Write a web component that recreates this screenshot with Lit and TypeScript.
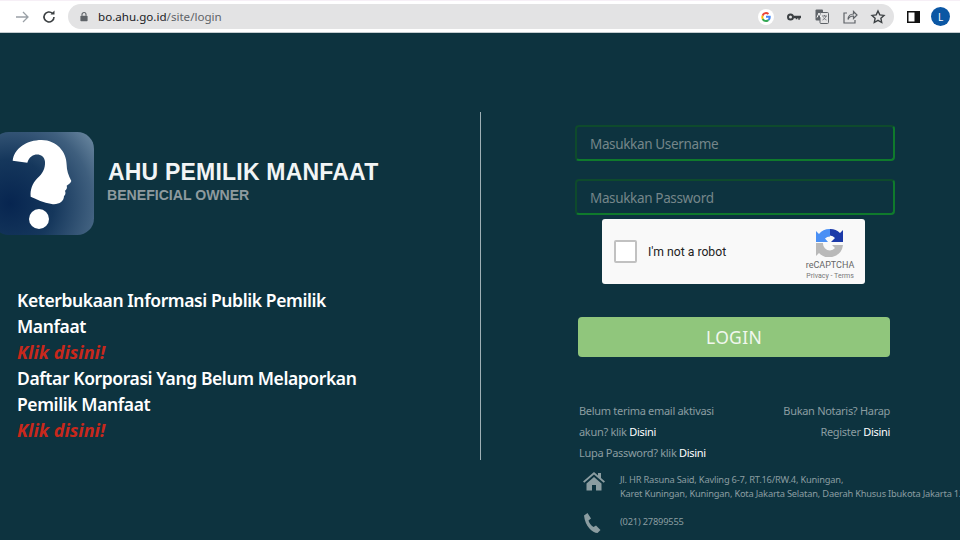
import { LitElement, html, css } from "lit";
import { customElement } from "lit/decorators.js";

@customElement("app-root")
export class AppRoot extends LitElement {
  static styles = css`
    :host { display: block; width: 960px; height: 540px; overflow: hidden; background: #0d333f; font-family: "Noto Sans", "Open Sans", sans-serif; }
    .toolbar { height: 33px; box-sizing: border-box; background: #fff; border-top: 1px solid #f6eff6; border-bottom: 1px solid #c4ccd0; display: flex; align-items: center; }
    .nav { width: 16px; height: 16px; flex: none; }
    .fwd { margin-left: 14px; }
    .rel { margin-left: 11px; }
    .omni { margin-left: 11px; width: 826px; height: 25px; border-radius: 13px; background: #e3e3e4; display: flex; align-items: center; flex: none; }
    .lock { margin-left: 12px; width: 8px; height: 11px; flex: none; }
    .url { margin-left: 10px; font: 11.6px "Noto Sans", sans-serif; color: #5f6368; flex: 1; }
    .url b { font-weight: 400; color: #202124; }
    .oi { width: 16px; height: 16px; margin-left: 12px; flex: none; }
    .omni .spacer { width: 8px; flex: none; }
    .panel { margin-left: 13px; width: 13px; height: 12px; flex: none; }
    .avatar { margin-left: 11px; width: 19px; height: 19px; border-radius: 50%; background: #0b57a4; color: #fff; font: 10px "Noto Sans", sans-serif; display: flex; align-items: center; justify-content: center; flex: none; }

    .main { display: grid; grid-template-columns: 481px 1fr; height: 507px; }
    .left { margin-top: 79px; height: 348px; border-right: 1px solid #9fb0b5; box-sizing: border-box; padding-top: 20px; }
    .brand { display: flex; align-items: center; margin-left: -8px; }
    .logo { width: 102px; height: 103px; flex: none; display: block; }
    .brand-text { margin-left: 14px; display: flex; flex-direction: column; margin-top: -5px; }
    .t1 { font: 700 23px/28px "Liberation Sans", sans-serif; color: #f2f5f5; letter-spacing: 0.2px; white-space: nowrap; }
    .t2 { font: 700 14.1px/18px "Liberation Sans", sans-serif; color: #8e9a9e; margin-left: -1px; white-space: nowrap; }
    .lead { margin: 52px 0 0 17px; width: 350px; font-weight: 600; font-size: 17.5px; letter-spacing: -0.4px; line-height: 26px; color: #fff; }
    .lead em { display: block; color: #c8281c; font-weight: 700; font-style: italic; font-size: 18px; letter-spacing: 0; }

    .right { padding: 92px 0 0 94px; display: flex; flex-direction: column; align-items: flex-start; }
    .field { width: 320px; height: 36px; box-sizing: border-box; border: 2px solid #0e4a2c; border-right-color: #0f7a2c; border-bottom-color: #0f7a2c; border-radius: 4px; padding: 2px 0 0 13px; display: flex; align-items: center; font-size: 13.5px; letter-spacing: -0.35px; color: #75868a; margin-bottom: 18px; }
    .captcha { margin: -14px 0 0 27px; width: 263px; height: 65px; box-sizing: border-box; background: #f9f9f9; border-radius: 3px; display: flex; align-items: center; padding-left: 12px; }
    .box { width: 23px; height: 23px; box-sizing: border-box; border: 2px solid #c1c1c1; border-radius: 2px; background: #fff; flex: none; }
    .robot { margin-left: 11px; font: 12.2px Roboto, sans-serif; color: #222; }
    .cap-side { margin-left: auto; width: 58px; margin-right: 6px; align-self: flex-start; padding-top: 10px; display: flex; flex-direction: column; align-items: center; }
    .cap-logo { width: 28px; height: 28px; }
    .cap-name { font: 9px/11px Roboto, sans-serif; color: #666; margin-top: 3px; }
    .cap-terms { font: 7px/10px Roboto, sans-serif; color: #777; }
    .login { margin: 33px 0 0 3px; width: 312px; height: 40px; border-radius: 4px; background: #90c67c; color: #f1f7ee; font-size: 17.5px; letter-spacing: 0.3px; display: flex; align-items: center; justify-content: center; }
    .links { margin: 43px 0 0 4px; width: 311px; display: flex; justify-content: space-between; font-size: 11px; letter-spacing: -0.3px; line-height: 21px; color: #8b9da1; }
    .links .r { text-align: right; }
    .links b { font-weight: 400; color: #fff; }
    .contact { display: flex; margin: 10px 0 0 8px; font-size: 9.3px; letter-spacing: -0.2px; line-height: 14px; color: #8b9da1; white-space: nowrap; }
    .contact svg { width: 22px; height: 20px; flex: none; margin-right: 15px; margin-top: -2px; }
    .contact.ph { margin-top: 14px; }
  `;

  render() {
    return html`
      <div class="toolbar">
        <svg class="nav fwd" viewBox="0 0 16 16" fill="none" stroke="#9aa0a6" stroke-width="1.3"><path d="M2 8h12M9 3l5 5-5 5"/></svg>
        <svg class="nav rel" viewBox="0 0 16 16" fill="none" stroke="#3c4043" stroke-width="1.6"><path d="M13 8a5 5 0 1 1-1.5-3.6"/><path d="M13.5 1.500v4h-4z" fill="#3c4043" stroke="none"/></svg>
        <div class="omni">
          <svg class="lock" viewBox="0 0 10 12"><path d="M2.500 5V3.500a2.500 2.500 0 0 1 5 0V5" fill="none" stroke="#5f6368" stroke-width="1.400"/><rect x="0.500" y="5" width="9" height="7" rx="1" fill="#5f6368"/></svg>
          <div class="url"><b>bo.ahu.go.id</b>/site/login</div>
          <svg class="oi" viewBox="0 0 16 16"><circle cx="8" cy="8" r="8" fill="#fff"/><path d="M12.600 6.800H8v1.900h2.700a2.800 2.800 0 0 1-1.200 1.800l1.600 1.200c1-.9 1.600-2.200 1.600-3.800 0-.4 0-.8-.1-1.100z" fill="#4285f4"/><path d="M8 13c1.300 0 2.400-.4 3.100-1.200l-1.600-1.200c-.4.3-.9.5-1.500.5-1.200 0-2.200-.8-2.500-1.900L3.800 10.400C4.600 12 6.200 13 8 13z" fill="#34a853"/><path d="M5.500 9.200a3 3 0 0 1 0-2L3.800 5.900a5 5 0 0 0 0 4.500z" fill="#fbbc05"/><path d="M8 5c.7 0 1.300.2 1.800.7l1.300-1.400A4.800 4.800 0 0 0 8 3 5 5 0 0 0 3.800 5.900l1.700 1.300C5.800 5.900 6.800 5 8 5z" fill="#ea4335"/></svg>
          <svg class="oi" viewBox="0 0 16 16" fill="#3c4043"><path d="M4.500 4.500a3.500 3.500 0 1 1 0 7 3.500 3.500 0 0 1 0-7zm0 2a1.500 1.500 0 1 0 0 3 1.500 1.500 0 0 0 0-3z" fill-rule="evenodd"/><path d="M7.500 6.800H15V9.200h-1.200v1.500h-1.500V9.200h-1v1h-1.500v-1H7.500z"/></svg>
          <svg class="oi" viewBox="0 0 16 16"><rect x="1.500" y="0.500" width="7.500" height="11" rx="1" fill="#5f6368"/><rect x="6" y="3.500" width="8.500" height="11" rx="1" fill="#e3e3e4" stroke="#5f6368"/><path d="M3 8.500l2-4.500 2 4.500" fill="none" stroke="#fff"/><path d="M8 7h5M10.500 6v1M12 7c-.5 2-2 3.500-3.500 4M9.500 8.500c.5 1 1.500 2 3 2.500" fill="none" stroke="#5f6368" stroke-width=".8"/></svg>
          <svg class="oi" viewBox="0 0 16 16" fill="none" stroke="#5f6368" stroke-width="1.200"><path d="M5 4H2v10h11v-3"/><path d="M6 10.500c0-3.500 2.500-5.500 5.500-5.500V2.500L15 6l-3.500 3.500V7C9 7 7 8 6 10.500z"/></svg>
          <svg class="oi" viewBox="0 0 16 16" fill="none" stroke="#3c4043" stroke-width="1.400"><path d="M8 2l1.800 3.900 4.200.5-3.100 2.900.8 4.200L8 11.400 4.300 13.500l.8-4.200L2 6.400l4.200-.5z"/></svg>
          <div class="spacer"></div>
        </div>
        <svg class="panel" viewBox="0 0 13 12"><rect x="0.750" y="0.750" width="11.500" height="10.500" fill="#fff" stroke="#111" stroke-width="1.500"/><rect x="7.500" y="0.750" width="4.750" height="10.500" fill="#111"/></svg>
        <div class="avatar">L</div>
      </div>

      <div class="main">
        <div class="left">
          <div class="brand">
            <svg class="logo" viewBox="-24 36 306 309">
              <defs>
                <radialGradient id="lg" gradientUnits="userSpaceOnUse" cx="30" cy="250" r="330">
                  <stop offset="0" stop-color="#072550"/>
                  <stop offset="0.4" stop-color="#15375c"/>
                  <stop offset="0.75" stop-color="#3f5f7e"/>
                  <stop offset="1" stop-color="#6f8ca4"/>
                </radialGradient>
              </defs>
              <rect x="-24" y="36" width="306" height="309" rx="50" fill="url(#lg)"/>
              <path fill="#fff" d="M38 122C42 85 80 60 125 60C170 61 200 95 200 135C200 150 205 165 214 183C212 190 205 193 200 197C203 205 198 210 195 212C198 220 196 225 192 228C192 245 175 255 155 252C130 248 110 238 92 230C90 210 97 190 112 175C128 160 136 145 135 125C132 97 92 95 82 128Z"/>
              <circle cx="117" cy="297" r="30" fill="#fff"/>
            </svg>
            <div class="brand-text">
              <div class="t1">AHU PEMILIK MANFAAT</div>
              <div class="t2">BENEFICIAL OWNER</div>
            </div>
          </div>
          <div class="lead">
            Keterbukaan Informasi Publik Pemilik Manfaat
            <em>Klik disini!</em>
            Daftar Korporasi Yang Belum Melaporkan Pemilik Manfaat
            <em>Klik disini!</em>
          </div>
        </div>

        <div class="right">
          <div class="field">Masukkan Username</div>
          <div class="field">Masukkan Password</div>
          <div class="captcha">
            <div class="box"></div>
            <div class="robot">I'm not a robot</div>
            <div class="cap-side">
              <svg class="cap-logo" viewBox="0 0 28 28">
                <path d="M14 0a14 14 0 0 1 10 4l3-3v12H15l4-4a7 7 0 0 0-5-2.500z" fill="#1c3aa9"/>
                <path d="M14 0v7.500a7 7 0 0 0-5 2l3 3.500H0V2l3 3A14 14 0 0 1 14 0z" fill="#4a90f5"/>
                <path d="M0 14h7a7 7 0 0 0 7 7.500 7 7 0 0 0 5-2.500l-3-3h11a14 14 0 0 1-24 8l-3 3z" fill="#b9b9b9"/>
              </svg>
              <div class="cap-name">reCAPTCHA</div>
              <div class="cap-terms">Privacy - Terms</div>
            </div>
          </div>
          <div class="login">LOGIN</div>
          <div class="links">
            <div>Belum terima email aktivasi<br>akun? klik <b>Disini</b><br>Lupa Password? klik <b>Disini</b></div>
            <div class="r">Bukan Notaris? Harap<br>Register <b>Disini</b></div>
          </div>
          <div class="contact">
            <svg viewBox="0 0 22 20" fill="#8b9da1"><path d="M11 1L0 10.500l1.300 1.300L11 3.500l9.700 8.300L22 10.500 18 7V2h-3v2.500z"/><path d="M3.500 12.500L11 6l7.500 6.500V19.500h-5.500v-5.500h-4v5.500H3.500z"/></svg>
            <div>Jl. HR Rasuna Said, Kavling 6-7, RT.16/RW.4, Kuningan,<br>Karet Kuningan, Kuningan, Kota Jakarta Selatan, Daerah Khusus Ibukota Jakarta 12940</div>
          </div>
          <div class="contact ph">
            <svg viewBox="0 0 22 20" fill="#8b9da1"><path d="M1 2.500L4.500 0l3.500 5.500-2.500 2c.5 2 2.500 5 5 6.500l2.500-1.500 4.500 4.500-3 3c-5 0-12.500-7-13.500-17.500z"/></svg>
            <div>(021) 27899555</div>
          </div>
        </div>
      </div>
    `;
  }
}
